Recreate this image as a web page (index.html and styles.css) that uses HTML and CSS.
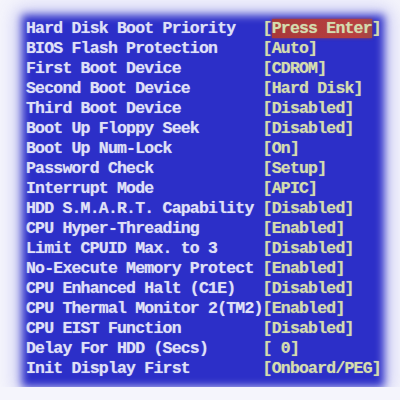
FILE: index.html
```html
<!DOCTYPE html>
<html lang="en">
<head>
    <meta charset="UTF-8">
    <meta name="viewport" content="width=device-width, initial-scale=1.0">
    <title>BIOS Advanced Features</title>
    <link rel="stylesheet" href="styles.css">
</head>
<body>
    <main class="screen">
        <div class="row"><span class="label">Hard Disk Boot Priority</span><span class="value">[<span class="selected">Press Enter</span>]</span></div>
        <div class="row"><span class="label">BIOS Flash Protection</span><span class="value">[Auto]</span></div>
        <div class="row"><span class="label">First Boot Device</span><span class="value">[CDROM]</span></div>
        <div class="row"><span class="label">Second Boot Device</span><span class="value">[Hard Disk]</span></div>
        <div class="row"><span class="label">Third Boot Device</span><span class="value">[Disabled]</span></div>
        <div class="row"><span class="label">Boot Up Floppy Seek</span><span class="value">[Disabled]</span></div>
        <div class="row"><span class="label">Boot Up Num-Lock</span><span class="value">[On]</span></div>
        <div class="row"><span class="label">Password Check</span><span class="value">[Setup]</span></div>
        <div class="row"><span class="label">Interrupt Mode</span><span class="value">[APIC]</span></div>
        <div class="row"><span class="label">HDD S.M.A.R.T. Capability</span><span class="value">[Disabled]</span></div>
        <div class="row"><span class="label">CPU Hyper-Threading</span><span class="value">[Enabled]</span></div>
        <div class="row"><span class="label">Limit CPUID Max. to 3</span><span class="value">[Disabled]</span></div>
        <div class="row"><span class="label">No-Execute Memory Protect</span><span class="value">[Enabled]</span></div>
        <div class="row"><span class="label">CPU Enhanced Halt (C1E)</span><span class="value">[Disabled]</span></div>
        <div class="row"><span class="label">CPU Thermal Monitor 2(TM2)</span><span class="value">[Enabled]</span></div>
        <div class="row"><span class="label">CPU EIST Function</span><span class="value">[Disabled]</span></div>
        <div class="row"><span class="label">Delay For HDD (Secs)</span><span class="value">[ 0]</span></div>
        <div class="row"><span class="label">Init Display First</span><span class="value">[Onboard/PEG]</span></div>
    </main>
</body>
</html>
```

FILE: styles.css
```css
body {
    margin: 0;
    padding-top: 15px;
    background: #f5f5fc;
    font-family: 'Liberation Mono', 'DejaVu Sans Mono', monospace;
}
.screen {
    position: relative;
    margin: 0 16px 0 22px;
    padding: 4px 0 8px 4px;
    font-size: 16.5px;
    font-weight: bold;
    letter-spacing: -0.8px;
    line-height: 20px;
}
/* soft edge of the photographed monitor */
.screen::before {
    content: "";
    position: absolute;
    inset: 0;
    background: #2c2fc8;
    filter: blur(4px);
    box-shadow: 0 0 16px 5px rgba(90, 90, 220, 0.35);
    z-index: -1;
}
.row {
    display: flex;
    white-space: pre;
}
.label {
    width: 236.6px;
    color: #dfe0f6;
    text-shadow: 0 0 1px rgba(220, 220, 255, 0.6);
}
.value {
    color: #d3dcae;
    text-shadow: 0 0 1px rgba(220, 230, 180, 0.6);
}
.selected {
    background: linear-gradient(90deg, #a83838, #b84040 85%, #a04848);
    box-shadow: 0 0 3px #a83a3a;
}
```
